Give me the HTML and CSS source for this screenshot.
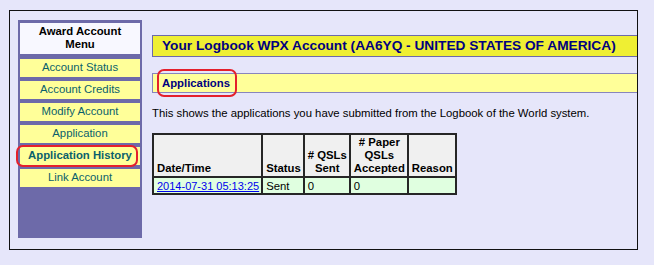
FILE: index.html
```html
<!DOCTYPE html>
<html lang="en">
<head>
    <meta charset="UTF-8">
    <meta name="viewport" content="width=device-width, initial-scale=1.0">
    <title>Application History</title>
    <link rel="stylesheet" href="styles.css">
</head>
<body>
    <div class="page">
        <div class="menu">
            <div class="menu-title">Award Account<br>Menu</div>
            <a class="menu-item" href="#">Account Status</a>
            <a class="menu-item" href="#">Account Credits</a>
            <a class="menu-item" href="#">Modify Account</a>
            <a class="menu-item" href="#">Application</a>
            <a class="menu-item current" href="#">Application History<span class="mark"></span></a>
            <a class="menu-item" href="#">Link Account</a>
        </div>

        <div class="content">
            <div class="account-bar">Your Logbook WPX Account (AA6YQ - UNITED STATES OF AMERICA)</div>
            <div class="section-bar">Applications<span class="mark"></span></div>
            <p class="intro">This shows the applications you have submitted from the Logbook of the World system.</p>

            <table class="apps">
                <tr>
                    <th>Date/Time</th>
                    <th>Status</th>
                    <th class="center"># QSLs<br>Sent</th>
                    <th class="center"># Paper<br>QSLs<br>Accepted</th>
                    <th>Reason</th>
                </tr>
                <tr>
                    <td><a class="date-link" href="#">2014-07-31 05:13:25</a></td>
                    <td>Sent</td>
                    <td>0</td>
                    <td>0</td>
                    <td></td>
                </tr>
            </table>
        </div>
    </div>
</body>
</html>
```

FILE: styles.css
```css
body {
    margin: 0;
    background-color: #e6e6fa;
    font-family: "Liberation Sans", Arial, sans-serif;
    font-size: 8.5pt;
    color: #000;
}

.page {
    display: flex;
    align-items: flex-start;
    box-sizing: border-box;
    width: 629px;
    height: 240px;
    margin: 10px 0 0 9px;
    padding: 9px 0 0 8px;
    border: 1px solid #111;
    overflow: hidden;
}

/* left menu */
.menu {
    display: flex;
    flex-direction: column;
    gap: 4.5px;
    box-sizing: border-box;
    width: 124px;
    height: 218px;
    padding: 3px 2px;
    background-color: #6d6aa9;
}

.menu-title {
    padding: 2px 0 3px;
    margin-bottom: 0.5px;
    background-color: #f8f8ff;
    font-weight: bold;
    text-align: center;
    line-height: 13px;
}

.menu-item {
    position: relative;
    display: block;
    height: 17.5px;
    line-height: 17px;
    background-color: #ffff99;
    color: #0b5f6c;
    text-align: center;
    text-decoration: none;
}

.menu-item.current {
    font-weight: bold;
}

.mark {
    position: absolute;
    box-sizing: border-box;
    border: 2px solid #e4202c;
    border-radius: 7px;
}

.menu-item .mark {
    left: -4px;
    top: -2px;
    width: 122px;
    height: 22px;
}

/* right side */
.content {
    flex: 1;
    min-width: 0;
    margin-left: 10px;
    padding-top: 15px;
}

.account-bar {
    height: 20px;
    line-height: 20px;
    padding-left: 9px;
    border: 1px solid #6d6aa9;
    border-right: none;
    background-color: #efef33;
    color: #000080;
    font-size: 13.7px;
    font-weight: bold;
    white-space: nowrap;
}

.section-bar {
    position: relative;
    height: 18px;
    line-height: 18px;
    margin-top: 16px;
    padding-left: 9px;
    border: 1px solid #8885bd;
    border-right: none;
    background-color: #ffff99;
    color: #000080;
    font-weight: bold;
}

.section-bar .mark {
    left: 4px;
    top: -5px;
    width: 80px;
    height: 28px;
}

.intro {
    margin: 14px 0 13px;
    line-height: 13px;
}

.apps {
    border-collapse: collapse;
    border: 2px solid #262626;
}

.apps th,
.apps td {
    border: 2px solid #262626;
    padding: 1px 2px 0 3px;
    line-height: 13px;
    text-align: left;
}

.apps th {
    background-color: #f0f0f0;
    vertical-align: bottom;
    padding-bottom: 1px;
}

.apps th.center {
    text-align: center;
}

.apps td {
    background-color: #e0ffe0;
    height: 14px;
}

.date-link {
    color: #0000ee;
    font-size: 11px;
}
```
